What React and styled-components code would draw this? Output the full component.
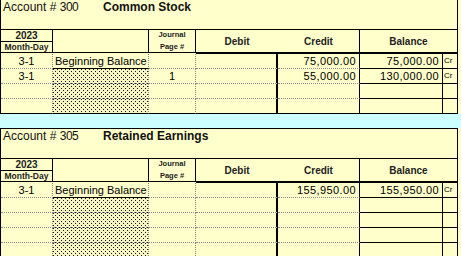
import React from "react";
import styled, { createGlobalStyle, css } from "styled-components";

const Global = createGlobalStyle`
  html, body { margin: 0; padding: 0; background: #ffffcc; overflow: hidden; }
  body { font-family: "Liberation Sans", Arial, sans-serif; color: #000; }
`;

const Page = styled.div`
  width: 461px;
  height: 257px;
  margin-top: -1px;
  overflow: hidden;
  background: #ffffcc;
`;

const Sheet = styled.section`
  box-sizing: border-box;
  width: 458px;
  border: 1px solid #000;
  border-bottom: none;
  display: grid;
  grid-template-columns: 52px 96px 47px 82px 82px 83px 14px;
  grid-template-rows: 30px 12px 12px;
  grid-auto-rows: 15px;
`;

const Gap = styled.div`
  height: 14px;
  background: #ccffff;
`;

const TitleCell = styled.div`
  grid-column: 1 / -1;
  box-sizing: border-box;
  border-bottom: 1px solid #000;
  display: flex;
  align-items: flex-start;
  padding-left: 2px;
  line-height: 14px;
  height: 30px;
`;

const AccountLabel = styled.span`
  width: 100px;
  font-size: 12px;
  color: #111;
  white-space: nowrap;
`;

const AccountNo = styled.span`
  font-size: 12px;
  letter-spacing: -0.5px;
`;

const AccountName = styled.span`
  font-size: 12px;
  font-weight: bold;
  color: #111;
`;

const lineFor = (kind) => {
  switch (kind) {
    case "dotted":
      return "1px dotted #8a8a8a";
    case "solid":
      return "1px solid #000";
    case "thick":
      return "2px solid #000";
    default:
      return "none";
  }
};

const HeadCell = styled.div`
  box-sizing: border-box;
  grid-column: span ${(p) => p.$cols || 1};
  grid-row: span ${(p) => p.$rows || 1};
  border-right: ${(p) => lineFor(p.$right)};
  border-bottom: ${(p) => lineFor(p.$bottom)};
  margin-bottom: ${(p) => (p.$gapBelow ? "1px" : "0")};
  display: flex;
  flex-direction: column;
  align-items: center;
  justify-content: center;
  font-weight: bold;
  font-size: ${(p) => p.$size || 10}px;
  color: #222;
  white-space: nowrap;
`;

const HeadLine = styled.span`
  line-height: 12px;
  font-size: 7.5px;
`;

const stipple = css`
  background-color: #ffffcc;
  background-image: conic-gradient(at 1px 1px, transparent 75%, #1a1a1a 0),
    conic-gradient(at 1px 1px, transparent 75%, #1a1a1a 0);
  background-size: 4px 4px, 4px 4px;
  background-position: 0 0, 2px 2px;
  background-repeat: repeat;
  box-shadow: inset 0 0 0 999px rgba(0, 0, 0, 0.04);
`;

const Cell = styled.div`
  box-sizing: border-box;
  border-right: ${(p) => lineFor(p.$right)};
  border-bottom: ${(p) => lineFor(p.$bottom)};
  font-size: 11px;
  line-height: 14px;
  white-space: nowrap;
  overflow: hidden;
  text-align: ${(p) => p.$align || "left"};
  padding: 0 ${(p) => (p.$align === "right" ? 3 : 0)}px 0
    ${(p) => (p.$align === "left" ? 2 : 0)}px;
  letter-spacing: ${(p) => (p.$num ? "0.4px" : "0")};
  ${(p) => p.$stipple && stipple}
`;

const CrCell = styled(Cell)`
  font-size: 8px;
  padding-left: 1px;
`;

function Ledger({ number, name, rows }) {
  return (
    <Sheet>
      <TitleCell>
        <AccountLabel>
          Account # <AccountNo>{number}</AccountNo>
        </AccountLabel>
        <AccountName>{name}</AccountName>
      </TitleCell>

      <HeadCell $right="solid" $bottom="solid">2023</HeadCell>
      <HeadCell $rows={2} $right="solid" $bottom="solid" $gapBelow />
      <HeadCell $rows={2} $right="solid" $bottom="solid" $gapBelow>
        <HeadLine>Journal</HeadLine>
        <HeadLine>Page #</HeadLine>
      </HeadCell>
      <HeadCell $rows={2} $bottom="thick">Debit</HeadCell>
      <HeadCell $rows={2} $right="solid" $bottom="thick">Credit</HeadCell>
      <HeadCell $rows={2} $cols={2} $bottom="thick">Balance</HeadCell>
      <HeadCell $right="solid" $bottom="solid" $gapBelow $size={8.5}>
        Month-Day
      </HeadCell>

      {rows.map((r, i) => {
        const last = i === rows.length - 1;
        const flat = last ? "solid" : "dotted";
        return (
          <React.Fragment key={i}>
            <Cell $align="center" $right="dotted" $bottom={flat}>{r.date}</Cell>
            <Cell
              $align="left"
              $right="dotted"
              $bottom={i === 0 || last ? "solid" : "dotted"}
              $stipple={i > 0}
            >
              {r.desc}
            </Cell>
            <Cell $align="center" $right="dotted" $bottom={flat}>{r.page}</Cell>
            <Cell $align="right" $num $right="thick" $bottom={flat}>{r.debit}</Cell>
            <Cell $align="right" $num $right="solid" $bottom={flat}>{r.credit}</Cell>
            <Cell $align="right" $num $right="solid" $bottom="solid">{r.balance}</Cell>
            <CrCell $bottom="solid">{r.balance ? "Cr" : ""}</CrCell>
          </React.Fragment>
        );
      })}
    </Sheet>
  );
}

const empty = { date: "", desc: "", page: "", debit: "", credit: "", balance: "" };

const stock = [
  { ...empty, date: "3-1", desc: "Beginning Balance", credit: "75,000.00", balance: "75,000.00" },
  { ...empty, date: "3-1", page: "1", credit: "55,000.00", balance: "130,000.00" },
  { ...empty },
  { ...empty },
];

const retained = [
  { ...empty, date: "3-1", desc: "Beginning Balance", credit: "155,950.00", balance: "155,950.00" },
  { ...empty },
  { ...empty },
  { ...empty },
  { ...empty },
  { ...empty },
];

export default function App() {
  return (
    <Page>
      <Global />
      <Ledger number="300" name="Common Stock" rows={stock} />
      <Gap />
      <Ledger number="305" name="Retained Earnings" rows={retained} />
    </Page>
  );
}
